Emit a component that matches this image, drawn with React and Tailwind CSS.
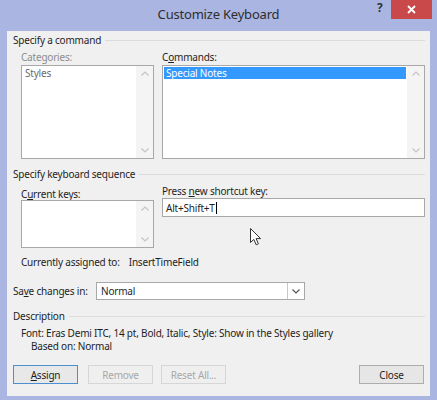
import React from "react";

const F = { fontFamily: '"Noto Sans", "Open Sans", sans-serif' };

function U({ children }) {
  return <span className="underline underline-offset-[1px]">{children}</span>;
}

function Header({ children, className = "" }) {
  return (
    <div className={"flex items-center h-[16px] pl-[6px] pr-[5px] " + className}>
      <span className="text-[#1e1e1e] whitespace-nowrap">{children}</span>
      <div className="flex-1 h-px bg-[#dcdcdc] ml-[4px]" />
    </div>
  );
}

function ScrollBar() {
  return (
    <div className="w-[17px] bg-[#f4f4f4] flex flex-col items-center justify-between py-[5px] text-[#c4c4c4]">
      <svg width="8" height="5" viewBox="0 0 8 5"><path d="M0.5 4.5 L4 1 L7.5 4.5" fill="none" stroke="#c4c4c4" strokeWidth="1.2" /></svg>
      <svg width="8" height="5" viewBox="0 0 8 5"><path d="M0.5 0.5 L4 4 L7.5 0.5" fill="none" stroke="#c4c4c4" strokeWidth="1.2" /></svg>
    </div>
  );
}

function Btn({ children, primary, disabled }) {
  return (
    <div
      className={
        "w-[65px] h-[19px] flex items-center justify-center border " +
        (primary
          ? "border-[#4a90d0] bg-[#e8e8e8] text-[#1e1e1e]"
          : disabled
          ? "border-[#d6d6d6] bg-[#efefef] text-[#a8a8a8]"
          : "border-[#adadad] bg-[#e6e6e6] text-[#1e1e1e]")
      }
    >
      {children}
    </div>
  );
}

export default function App() {
  return (
    <div className="w-[437px] h-[400px] bg-[#aab5e2] flex flex-col text-[10px] leading-[12px] tracking-[-0.2px]" style={F}>
      {/* title bar */}
      <div className="relative h-[31px] flex items-start justify-center">
        <div className="mt-[6px] text-[13px] leading-[17px] tracking-[-0.2px] text-[#2e2e2e]">Customize Keyboard</div>
        <div className="absolute left-[377px] top-[2px] text-[12px] font-bold text-[#333]">?</div>
        <div className="absolute left-[391px] top-0 w-[41px] h-[19px] bg-[#c9494b] flex items-center justify-center">
          <svg width="9" height="9" viewBox="0 0 9 9"><path d="M1 1 L8 8 M8 1 L1 8" stroke="#fff" strokeWidth="1.8" /></svg>
        </div>
      </div>
      {/* content */}
      <div className="mx-[7px] h-[365px] bg-[#f0f0f0] flex flex-col">
        <Header className="mt-[1px]">Specify a command</Header>
        <div className="flex pl-[14px] mt-[2px]">
          <div className="w-[133px] flex flex-col">
            <div className="h-[14px] leading-[14px] text-[#8d8d8d]">Categories:</div>
            <div className="mt-[1px] h-[94px] border border-[#a8a8a8] bg-white flex">
              <div className="flex-1 pl-[3px] pt-[1px] text-[#6a6a6a]">Styles</div>
              <ScrollBar />
            </div>
          </div>
          <div className="w-[263px] ml-[8px] flex flex-col">
            <div className="h-[14px] leading-[14px] text-[#1e1e1e]">C<U>o</U>mmands:</div>
            <div className="mt-[1px] h-[94px] border border-[#a8a8a8] bg-white flex">
              <div className="flex-1 p-[1px]">
                <div className="h-[12px] bg-[#3399ff] text-white pl-[2px] leading-[12px]">Special Notes</div>
              </div>
              <ScrollBar />
            </div>
          </div>
        </div>
        <Header className="mt-[7px]">Specify keyboard sequence</Header>
        <div className="flex pl-[14px]">
          <div className="w-[133px] flex flex-col">
            <div className="mt-[6px] h-[12px] text-[#1e1e1e]">C<U>u</U>rrent keys:</div>
            <div className="h-[48px] border border-[#a8a8a8] bg-white flex">
              <div className="flex-1" />
              <ScrollBar />
            </div>
          </div>
          <div className="w-[263px] ml-[8px] flex flex-col">
            <div className="mt-[3px] h-[12px] text-[#1e1e1e]">Press <U>n</U>ew shortcut key:</div>
            <div className="mt-[1px] h-[19px] border border-[#a8a8a8] bg-white flex items-center pl-[3px] text-[#1e1e1e]">
              Alt+Shift+T<span className="inline-block w-px h-[12px] bg-black ml-[1px]" />
            </div>
            <div className="mt-[11px] ml-[88px]">
              <svg width="12" height="18" viewBox="0 0 12 18">
                <path d="M0.5 0.5 L0.5 14.5 L3.8 11.4 L6.2 16.8 L8.4 15.8 L6.1 10.6 L10.6 10.6 Z" fill="#fff" stroke="#333" strokeWidth="1" strokeLinejoin="round" />
              </svg>
            </div>
          </div>
        </div>
        <div className="flex pl-[14px] mt-[7px] h-[14px] items-center text-[#1e1e1e]">
          <span>Currently assigned to:</span>
          <span className="ml-[9px]">InsertTimeField</span>
        </div>
        <div className="flex items-center pl-[6px] mt-[13px]">
          <span className="w-[83px] text-[#1e1e1e]">Sa<U>v</U>e changes in:</span>
          <div className="w-[209px] h-[18px] border border-[#a8a8a8] bg-white flex">
            <div className="flex-1 pl-[4px] flex items-center text-[#1e1e1e]">Normal</div>
            <div className="w-[17px] border-l border-[#c8c8c8] flex items-center justify-center">
              <svg width="8" height="5" viewBox="0 0 8 5"><path d="M0.5 0.5 L4 4 L7.5 0.5" fill="none" stroke="#555" strokeWidth="1.2" /></svg>
            </div>
          </div>
        </div>
        <Header className="mt-[8px]">Description</Header>
        <div className="pl-[14px] mt-[3px] h-[12px] leading-[12px] text-[#1e1e1e] whitespace-nowrap">
          Font: Eras Demi ITC, 14 pt, Bold, Italic, Style: Show in the Styles gallery
        </div>
        <div className="pl-[24px] mt-[1px] h-[12px] leading-[12px] text-[#1e1e1e]">Based on: Normal</div>
        <div className="flex pl-[6px] pr-[6px] mt-[13px]">
          <Btn primary><U>A</U>ssign</Btn>
          <div className="ml-[10px]"><Btn disabled>Remove</Btn></div>
          <div className="ml-[8px]"><Btn disabled>Reset All...</Btn></div>
          <div className="ml-auto"><Btn>Close</Btn></div>
        </div>
      </div>
    </div>
  );
}
